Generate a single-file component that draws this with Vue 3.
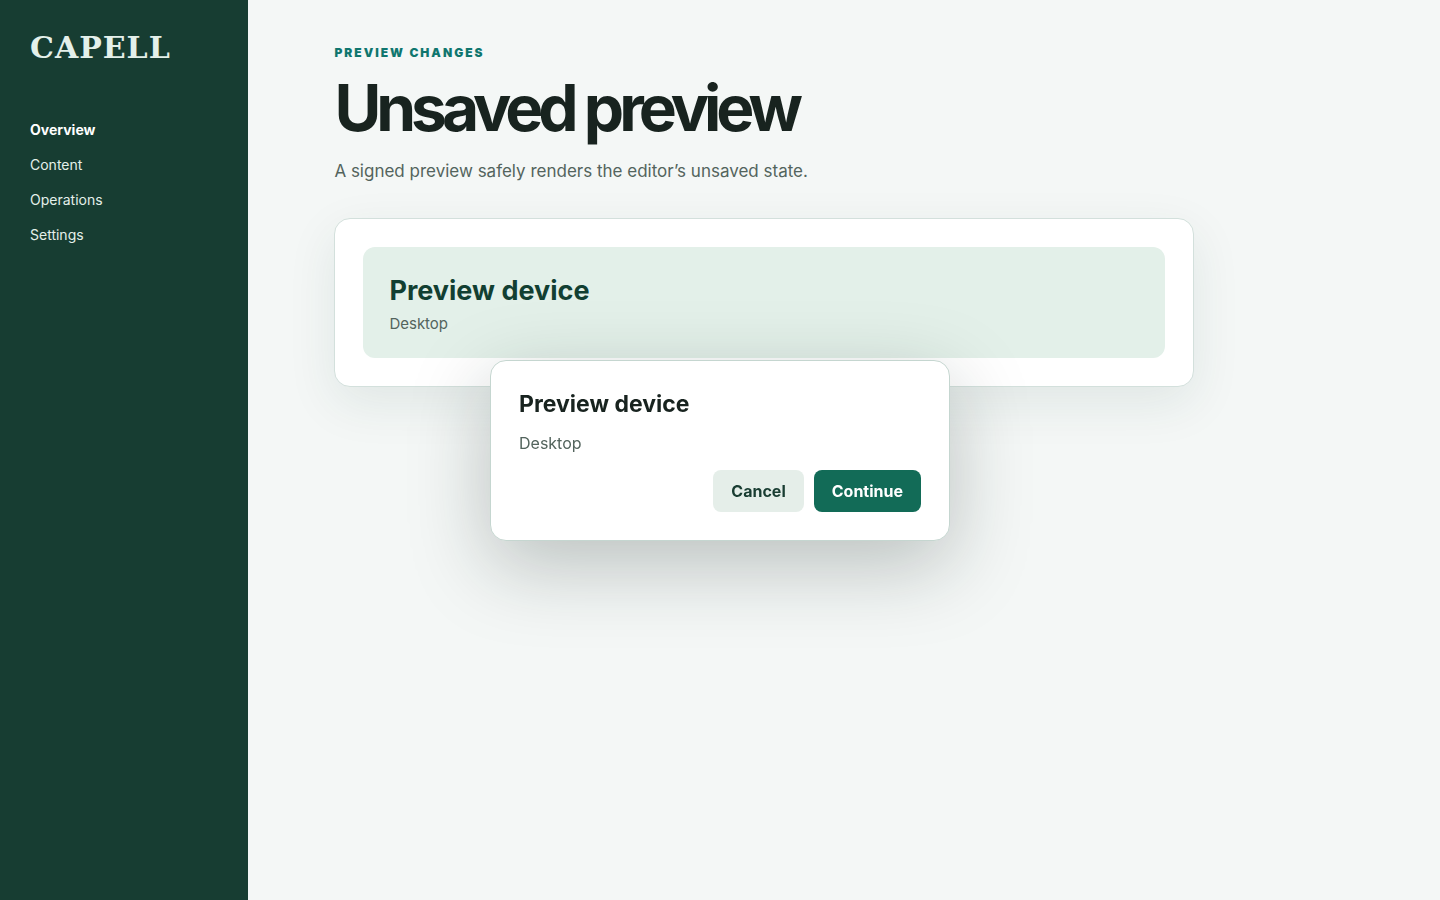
<script setup>
import { ref } from 'vue'

const links = ['Overview', 'Content', 'Operations', 'Settings']
const current = ref('Overview')
const open = ref(true)
</script>

<template>
  <div class="shell">
    <aside class="sidebar">
      <div class="brand">CAPELL</div>
      <nav class="nav" aria-label="Main">
        <a
          v-for="link in links"
          :key="link"
          href="#"
          :class="{ active: link === current }"
          @click.prevent="current = link"
        >{{ link }}</a>
      </nav>
    </aside>

    <main class="main">
      <p class="eyebrow">Preview changes</p>
      <h1>Unsaved preview</h1>
      <p class="lead">A signed preview safely renders the editor’s unsaved state.</p>
      <section class="card">
        <div class="panel">
          <h2>Preview device</h2>
          <p>Desktop</p>
        </div>
      </section>
    </main>

    <dialog class="dialog" :open="open" aria-labelledby="dialog-title">
      <h2 id="dialog-title">Preview device</h2>
      <p>Desktop</p>
      <div class="actions">
        <button type="button" class="secondary" @click="open = false">Cancel</button>
        <button type="button" class="primary" @click="open = false">Continue</button>
      </div>
    </dialog>
  </div>
</template>

<style>
body {
  margin: 0;
  background: #f4f7f6;
}
</style>

<style scoped>
.shell {
  display: grid;
  grid-template-columns: 248px 1fr;
  min-height: 100vh;
  font-family: Inter, "Liberation Sans", sans-serif;
  color: #18231f;
  background: #f4f7f6;
}

.shell * {
  box-sizing: border-box;
}

.sidebar {
  padding: 30px;
  background: #173d32;
  color: #e4f0ea;
}

.brand {
  font-family: "DejaVu Serif", serif;
  font-size: 30px;
  line-height: 35px;
  font-weight: 700;
  letter-spacing: 1px;
}

.nav {
  display: grid;
  gap: 18px;
  margin-top: 56px;
}

.nav a {
  font-size: 14px;
  line-height: 17px;
  color: inherit;
  text-decoration: none;
}

.nav a.active {
  color: #fff;
  font-weight: 700;
}

.main {
  padding: 44px 6vw;
}

.eyebrow {
  margin: 0;
  font-size: 12px;
  line-height: 18px;
  font-weight: 900;
  letter-spacing: 2px;
  text-transform: uppercase;
  color: #0f766e;
}

h1 {
  margin: 14px 0 17px;
  font-size: 64px;
  line-height: 64px;
  font-weight: 700;
  letter-spacing: -5px;
}

.lead {
  margin: 0;
  font-size: 17px;
  line-height: 28px;
  color: #53645d;
}

.card {
  max-width: 860px;
  margin-top: 33px;
  padding: 28px;
  border: 1px solid #d3e0dc;
  border-radius: 16px;
  background: #fff;
  box-shadow: 0 16px 50px rgba(24, 61, 50, 0.09);
}

.panel {
  padding: 26px;
  border-radius: 12px;
  background: #e3f0e9;
}

.panel h2 {
  margin: 0;
  font-size: 27px;
  line-height: 36px;
  font-weight: 700;
  color: #123f32;
}

.panel p {
  margin: 6px 0 0;
  font-size: 15px;
  line-height: 17px;
  color: #53645d;
}

.dialog {
  position: fixed;
  inset: 0;
  width: 460px;
  max-width: 100%;
  height: fit-content;
  margin: auto;
  padding: 28px;
  border: 1px solid #c5d6d0;
  border-radius: 16px;
  background: #fff;
  color: inherit;
  box-shadow: 0 24px 80px rgba(18, 35, 30, 0.26);
}

.dialog h2 {
  margin: 0;
  font-size: 23px;
  line-height: 31px;
  font-weight: 700;
}

.dialog p {
  margin: 11px 0 15px;
  font-size: 16px;
  line-height: 24px;
  color: #53645d;
}

.actions {
  display: flex;
  justify-content: flex-end;
  gap: 10px;
}

button {
  padding: 11px 18px;
  border: 0;
  border-radius: 8px;
  font-family: inherit;
  font-size: 16px;
  line-height: 20px;
  font-weight: 700;
  cursor: pointer;
}

.secondary {
  background: #e5eee9;
  color: #193d32;
}

.primary {
  background: #126b57;
  color: #fff;
}
</style>
